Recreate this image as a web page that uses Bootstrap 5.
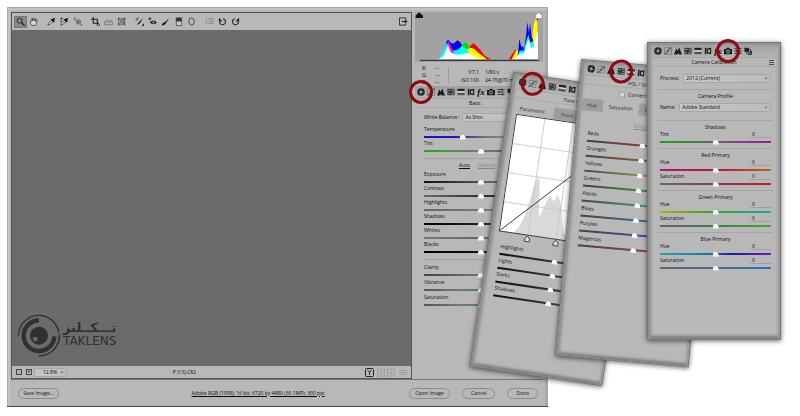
<!DOCTYPE html>
<html lang="en">
<head>
<meta charset="utf-8">
<meta name="viewport" content="width=device-width, initial-scale=1">
<title>Camera Raw</title>
<link href="https://cdn.jsdelivr.net/npm/bootstrap@5.3.0/dist/css/bootstrap.min.css" rel="stylesheet">
<style>
:root{--face:#b8b8b8;--ink:#0c0c0c;--line:#a2a2a2}
body{background:#fff;color:var(--ink);font:5px/7px "Open Sans","Noto Sans",sans-serif;overflow:hidden}
button,input,select{font:inherit;color:inherit}
button{background:none;border:0;padding:0}
svg{display:block}
.stage{padding:7px 0 10px 7px}
.win{width:69%;max-width:541px;background:var(--face);border:solid #a8a8a8;border-width:1px 1px 0;box-shadow:inset 2px 2px 0 #c2c2c2,inset -2px 0 0 #a9a9a9,0 1px 0 #444;padding:4px 4px 0 3px}
.preview{border:1px solid #555;min-width:0}
.bar{height:17px;padding:0 1px 0 2px}
.tools{gap:5px}
.tool{width:13px;height:12px;display:flex;align-items:center;justify-content:center}
.tool.on{background:#888;outline:1px solid #777;outline-offset:-1px}
.tool svg{width:9px;height:9px}
.photo{background:#6b6b6b;min-height:336px;padding:0 0 8px 5px}
.brandname{font-family:"DejaVu Sans",sans-serif;color:#303030;margin-left:2px;padding-top:3px}
.brandname .fa{font-size:13px;line-height:15px;font-weight:700}
.brandname .en{font-size:12px;line-height:13px}
.status{height:12px;padding:0 3px 0 4px}
.zoombtn{width:6px;height:6px;border:1px solid #444;line-height:3px;display:flex;align-items:center;justify-content:center;font-size:5px}
.zoomsel{width:33px;height:8px;margin-left:2px}
.file{margin-left:27%}
.side{width:128px;margin-left:3px}
.hist{background:#a2a2a2}
.info{height:21px;margin-top:3px;padding:0 4px 0 7px}
.chan{width:26px}
.info>div+div{border-left:1px dotted #888}
.expo{padding-left:12px;gap:6px;line-height:8px}
.strip{height:13px;padding:0 1px;background:linear-gradient(#a0a0a0,#b4b4b4);border-bottom:1px solid #a6a6a6}
.tabi{width:10px;height:12px;display:flex;align-items:center;justify-content:center;position:relative}
.tabi svg{width:8px;height:8px}
.tabi i{font:italic 700 9px/9px "Liberation Serif",serif}
.tabi.ring::after{content:"";position:absolute;left:-7px;top:-6px;width:24px;height:24px;border:3px solid #8f0b14;border-radius:50%;z-index:2}
.cap{height:9px;line-height:8px;text-align:center;border-bottom:1px solid #a9a9a9;position:relative}
.cap svg{position:absolute;right:2px;top:2px;width:5px;height:5px}
.inner{padding:0 5px 0 8px}
.field{margin-top:7px;gap:4px}
.side .inner{padding-left:9px}
.side .field{margin-top:5px}
.sel{appearance:none;height:9px;line-height:7px;border:1px solid #a6a6a6;border-radius:1px;padding:0 2px;background:#c6c6c6 linear-gradient(90deg,#c6c6c6,#bcbcbc);min-width:0}
.selbox{position:relative;display:flex;min-width:0}
.selbox::after{content:"";position:absolute;right:4px;top:3px;width:2px;height:2px;border:solid #777;border-width:0 1px 1px 0;transform:rotate(45deg)}
.ctl{height:14px;position:relative}
.ctl label{display:block;height:7px;line-height:7px}
.ctl input[type=range]{appearance:none;display:block;width:100%;height:7px;margin:0;background:none}
.ctl input[type=range]::-webkit-slider-runnable-track{height:2px;background:var(--trk)}
.ctl input[type=range]::-webkit-slider-thumb{appearance:none;width:6px;height:5px;margin-top:-1px;background:#fff;clip-path:polygon(50% 0,100% 45%,100% 100%,0 100%,0 45%)}
.val{width:21px;height:7px;border:0;border-bottom:1px solid #a0a0a0;background:none;padding:0 2px;line-height:6px}
.rule{border-top:1px solid var(--line)}
.auto{padding:3px 0 2px;gap:8px}
.sect{border-top:1px solid #a6a6a6;padding:3px 2px;margin:0 -2px}
.sect.first{margin-top:6px}
.sect h2{font-size:5px;line-height:7px;font-weight:400;margin:0;text-align:center}
a{color:inherit}
.dim{color:#858585}
.foot{height:27px;padding:0 5px 0 7px;border-top:1px solid #777}
.pill{border:1px solid #8c8c8c;border-radius:6px;height:11px;line-height:9px;padding:0 8px;color:#222}
.pill.wide{padding:0 2px;width:41px}
/* floating palettes */
.pal{position:absolute;width:132px;height:296px;background:var(--face);padding:2px 4px;transform-origin:0 0;
 box-shadow:inset 3px 0 3px #8e8e8e,inset -2px 0 2px #9b9b9b,inset 0 -3px 3px #777,inset 0 3px 4px #8d8d8d,0 0 0 1px #777,0 1px 5px 1px rgba(0,0,0,.6)}
.tone{left:64.25%;top:73px;transform:rotate(8.4deg)}
.hsl{left:72.75%;top:60px;transform:rotate(5deg)}
.calib{left:81%;top:43px}
.seg{height:12px;margin:0 -1px}
.seg button{height:12px;background:#9d9d9d;border:1px solid #a3a3a3;color:#333;padding:0 7px}
.seg button.on{background:none;border-color:transparent;color:#222}
.hsl .seg button{padding:0 5px}
.graybox{padding-left:36px;gap:3px;margin:3px 0 4px}
.graybox input{width:6px;height:6px;margin:0;appearance:none;background:#d6d6d6;border:1px solid #999}
.gap1{gap:1px}
</style>
<script src="https://cdn.jsdelivr.net/npm/bootstrap@5.3.0/dist/js/bootstrap.bundle.min.js"></script>
</head>
<body>
<svg width="0" height="0" class="position-absolute" aria-hidden="true">
 <symbol id="basic" viewBox="0 0 10 10"><circle cx="5" cy="5" r="4.7" fill="#222"/><circle cx="5" cy="5" r="1.6" fill="#aaa"/><path d="M5 .5 6.500 4M9.500 5 6 6.500M5 9.500 3.500 6M.5 5 4 3.500" stroke="#888" stroke-width=".6"/></symbol>
 <symbol id="curve" viewBox="0 0 10 10"><path d="M.5 1h9v8h-9zM.5 5h9M5 1v8" fill="#b5b5b5" stroke="#666" stroke-width=".8"/><path d="M.5 9C5 8 5 1.500 9.500 1" fill="none" stroke="#333" stroke-width="1.100"/></symbol>
 <symbol id="detail" viewBox="0 0 10 10"><path d="M0 9.500 3 1.500 4.500 5 6.500.5 10 9.500H6L5 7.500 4 9.500z" fill="#1c1c1c"/></symbol>
 <symbol id="hslg" viewBox="0 0 10 10"><path d="M.5 1h9v8h-9z" fill="#333"/><path d="M1.500 3h3M1.500 7h2M6 2.500h3M6.500 5H9M5 7.500h4" stroke="#bbb" stroke-width=".9"/></symbol>
 <symbol id="split" viewBox="0 0 10 10"><path d="M.5 1h9v3h-9z" fill="#222"/><path d="M.5 4h9v2h-9z" fill="#ddd"/><path d="M.5 6h9v3h-9z" fill="#555"/></symbol>
 <symbol id="lens" viewBox="0 0 10 10"><path d="M1 1h2v8H1zM3.500 2 9 1v8L3.500 8z" fill="#222"/><path d="M5 3.500 7.500 3v4L5 6.500z" fill="#aaa"/></symbol>
 <symbol id="cam" viewBox="0 0 10 10"><path d="M0 2.500h2.500L3.500 1h3l1 1.500H10V9H0z" fill="#1c1c1c"/><circle cx="5" cy="5.600" r="1.900" fill="none" stroke="#ccc"/></symbol>
 <symbol id="lines" viewBox="0 0 10 10"><path d="M.5 2h9M.5 5h9M.5 8h9" stroke="#222"/><path d="M6 1v2M3 4v2M7 7v2" stroke="#222" stroke-width="1.500"/></symbol>
 <symbol id="stack" viewBox="0 0 10 10"><path d="M.5 1h6v5h-6z" fill="#222"/><path d="M2.500 7.500H8V3M4.500 9.200h5V5" fill="none" stroke="#222" stroke-width="1.200"/></symbol>
 <symbol id="zoomi" viewBox="0 0 10 10"><circle cx="4" cy="4" r="2.800" fill="none" stroke="#222"/><path d="m6 6 3.500 3.500" stroke="#222" stroke-width="1.600"/></symbol>
 <symbol id="hand" viewBox="0 0 10 10"><path d="M3 9.300 1 6q0-1.300 1.500-.5L2.200 2.500q.8-1 1.300 0l.5 2-.2-3q.8-1 1.400 0l.3 2.800.6-2.500q1-.8 1.200.3L7 5l1-2q1.200-.3 1 .8L8 7.500l-.8 1.800z" fill="#ddd" stroke="#333" stroke-width=".8"/></symbol>
 <symbol id="drop" viewBox="0 0 10 10"><path d="m1 9 .6-2L5.500 3 7 4.500 3 8.400z" fill="#ddd" stroke="#222" stroke-width=".8"/><path d="m5 2.500 3 3M6 4 8.500 1.500" stroke="#111" stroke-width="2"/></symbol>
 <symbol id="dropplus" viewBox="0 0 10 10"><use href="#drop"/><path d="M0 2h3.500M1.800.2v3.600M0 5h2" stroke="#333" stroke-width=".8"/></symbol>
 <symbol id="target" viewBox="0 0 10 10"><path d="M0 2h4M2 0v4" stroke="#666" stroke-width=".8"/><circle cx="6" cy="5.500" r="2.500" fill="#999" stroke="#666"/><circle cx="6" cy="5.500" r="1" fill="#444"/><path d="M8 9.500h2v-2z" fill="#333"/></symbol>
 <symbol id="crop" viewBox="0 0 10 10"><path d="M2.500 0v7H9M0 2.500h7v7" fill="none" stroke="#222" stroke-width="1.200"/><path d="M8 9.800h2v-2z" fill="#222"/></symbol>
 <symbol id="level" viewBox="0 0 10 10"><path d="M.5 5.500h9v3h-9zM1 5l2-2 2 2 2-2 2 2" fill="none" stroke="#777" stroke-width="1"/></symbol>
 <symbol id="warp" viewBox="0 0 10 10"><path d="M2 .5v9M8.500.5v9M.5 2h9M.5 8h9M4 4l3-1v4L4 6z" fill="none" stroke="#444" stroke-width=".9"/></symbol>
 <symbol id="spot" viewBox="0 0 10 10"><path d="m2 9 2-3L9 1 5.500 7z" fill="#111"/><path d="m1 1 2 2M3.500.5v2M.5 4h2M8 9.500h2v-2z" stroke="#222" stroke-width=".8"/></symbol>
 <symbol id="eye" viewBox="0 0 10 10"><path d="M0 2h4M2 0v4" stroke="#222" stroke-width=".8"/><path d="M2 6q4-4 8 0-4 4-8 0z" fill="#222"/><circle cx="6" cy="6" r="1" fill="#bbb"/></symbol>
 <symbol id="brush" viewBox="0 0 10 10"><path d="M1 9.500q0-3 3-3.500L9 1 5.500 7Q4 9.500 1 9.500z" fill="#111"/></symbol>
 <symbol id="grad" viewBox="0 0 10 10"><path d="M2.500 1h6v8.500h-6z" fill="#ccc" stroke="#333" stroke-width=".8"/><path d="M2.500 1h6v4h-6z" fill="#333"/></symbol>
 <symbol id="oval" viewBox="0 0 10 10"><ellipse cx="5" cy="5" rx="3" ry="4" fill="none" stroke="#333" stroke-width=".9"/></symbol>
 <symbol id="list" viewBox="0 0 10 10"><path d="M1 2h1.500M4 2h5.500M1 4.500h1.500M4 4.500h5.500M1 7h1.500M4 7h5.500" stroke="#7c7c7c"/></symbol>
 <symbol id="ccw" viewBox="0 0 10 10"><path d="M2.500 3.200A3.300 3.300 0 1 0 5.500 2" fill="none" stroke="#222" stroke-width="1.200"/><path d="M1 .8v4h4z" fill="#222"/></symbol>
 <symbol id="cw" viewBox="0 0 10 10"><path d="M7.500 3.200A3.300 3.300 0 1 1 4.500 2" fill="none" stroke="#222" stroke-width="1.200"/><path d="M9 .8v4H5z" fill="#222"/></symbol>
 <symbol id="export" viewBox="0 0 10 10"><path d="M7.500 3V1h-7v8h7V7" fill="none" stroke="#222"/><path d="M3 5h4" stroke="#222" stroke-width="1.200"/><path d="M6.500 2.800 9.800 5 6.500 7.200z" fill="#222"/></symbol>
 <symbol id="menu" viewBox="0 0 5 5"><path d="M0 .5h5M0 2.500h5M0 4.500h5" stroke="#333" stroke-width=".8"/></symbol>
</svg>

<main class="stage position-relative">
 <div class="win">
  <div class="d-flex">
   <section class="preview flex-grow-1 d-flex flex-column">
    <div class="bar d-flex align-items-center justify-content-between">
     <div class="tools d-flex" id="tools"></div>
     <button class="tool" aria-label="Full screen"><svg><use href="#export"/></svg></button>
    </div>
    <div class="photo flex-grow-1 d-flex align-items-end">
     <div class="d-flex align-items-start">
      <svg width="44" height="45" viewBox="52 70 132 135" fill="none" stroke="#303030">
       <circle cx="118" cy="138" r="27" fill="#303030" stroke="none"/><circle cx="107" cy="148" r="7" fill="#6b6b6b" stroke="none"/>
       <path d="M118 92A46 46 0 1 0 164 140" stroke-width="13"/>
       <path d="M56 138A62 62 0 0 1 118 77 61 61 0 0 1 177 125" stroke-width="4"/>
       <path d="M180 136A62 62 0 0 1 118 199" stroke-width="4"/><path d="M118 77A61 61 0 0 1 160 182" stroke-width="2"/>
      </svg>
      <div class="brandname d-flex flex-column mt-1"><span class="fa" lang="fa" dir="rtl">تـــکــلنز</span><span class="en">TAKLENS</span></div>
     </div>
    </div>
    <div class="status d-flex align-items-center">
     <button class="zoombtn" aria-label="Zoom out">-</button><button class="zoombtn ms-1 me-0" aria-label="Zoom in">+</button>
     <span class="selbox"><select class="sel zoomsel ps-2" aria-label="Zoom level"><option>12.8%</option></select></span>
     <span class="file">P (13).CR2</span>
     <svg class="ms-auto" width="43" height="9" viewBox="0 0 43 9" fill="none" stroke="#222"><rect x=".5" y=".5" width="8" height="8" rx="1"/><path d="m2.500 2 2 2.500 2-2.500M4.500 4.500V7" /><g stroke="#999"><path d="M12.500 1h7v7h-7zM22.500 1h7v7h-7zM14.500 3h3M14.500 6h3M16 3v3M24 4.500h4M26 2.500v4M34 2.500h8M34 4.500h8M34 6.500h8" stroke-width=".8"/></g></svg>
    </div>
   </section>

   <aside class="side flex-shrink-0">
    <div class="hist">
     <svg class="w-100" height="50" viewBox="60 36 384 150" preserveAspectRatio="none">
      <path d="M140 178 148 150 155 124 160 119 168 128 175 131 188 121 197 128 203 140 225 178z" fill="#0000f0"/>
      <path d="M213 178 222 145 228 135 236 130 245 138 258 152 270 168 288 178z" fill="#f00"/>
      <path d="M188 178 197 142 205 132 212 127 220 136 228 150 240 178z" fill="#0d0"/>
      <path d="M200 178 217 148 226 143 238 147 252 160 276 178z" fill="#ff0"/>
      <path d="M132 178 148 146 155 128 163 142 176 152 190 148 202 138 213 145 221 156 230 178z" fill="#0ff"/>
      <path d="M157 130 160 122 166 136 178 160 168 164z" fill="#f0f"/>
      <path d="M130 178 146 168 155 146 160 136 167 156 182 164 204 163 217 158 228 164 244 173 270 178z" fill="#fff"/>
      <path d="M342 178 350 164 362 148 366 158 378 140 388 150 400 110 410 120 420 90 428 48 428 178z" fill="#f00"/>
      <path d="M350 178 362 154 376 148 388 142 402 112 412 116 416 76 421 58 428 64 428 178z" fill="#ff0"/>
      <path d="M366 178 370 150 373 116 378 138 388 144 394 100 397 66 402 100 405 68 410 112 414 120 418 178z" fill="#0000f0"/>
      <path d="M364 178 374 152 386 152 394 122 400 104 406 128 414 124 422 178z" fill="#0ff"/>
      <path d="M358 178 372 162 388 160 396 128 402 118 407 144 416 140 421 112 429 92 429 178z" fill="#fff"/>
      <path d="M75 181H432" stroke="#222" stroke-width="3"/>
      <path d="M62 54V47L72 37 84 47V54z" fill="#111"/><path d="M423 54V46L431 38 440 46V54z" fill="#fff"/>
     </svg>
    </div>
    <div class="info d-flex align-items-center">
     <div class="chan"><div class="d-flex gap-2"><span>R:</span><span>---</span></div><div class="d-flex gap-2"><span>G:</span><span>---</span></div><div class="d-flex gap-2"><span>B:</span><span>---</span></div></div>
     <div class="expo d-flex text-nowrap"><div class="text-end">f/7.1<br>ISO 100</div><div>1/80 s<br>24-70@70 mm</div></div>
    </div>
    <div class="strip d-flex" data-ring="0"></div>
    <div class="cap pe-2">Basic</div>
    <div class="inner">
     <div class="field d-flex align-items-center mb-1"><label for="wb">White Balance:</label><span class="selbox flex-grow-1"><select id="wb" class="sel w-100"><option>As Shot</option></select></span></div>
     <div data-sliders="Temperature,33,#1616c8 25%|#777 55%|#c8bc10;Tint,50,#14b414|#777|#b414b4"></div>
     <div class="rule mt-1"></div>
     <div class="auto d-flex justify-content-center pe-2"><a href="#">Auto</a><a href="#" class="dim">Default</a></div>
     <div data-sliders="Exposure,50,#111|#555|#999;Contrast,50,#666|#333|#111;Highlights,50,#666|#777|#aaa;Shadows,50,#000|#222|#888;Whites,50,#777|#666|#aaa;Blacks,50,#000|#111|#777"></div>
     <div class="rule mt-1 mb-1"></div>
     <div class="d-flex flex-column gap1" data-sliders="Clarity,50,#444|#777|#333;Vibrance,50,#555|#777 30%|#2d8a3c|#b33;Saturation,50,#555|#777 30%|#2d8a3c|#b33"></div>
    </div>
   </aside>
  </div>
  <footer class="foot d-flex align-items-center">
   <button class="pill wide">Save Image...</button>
   <a href="#" class="mx-auto ps-5">Adobe RGB (1998); 16 bit; 6720 by 4480 (30.1MP); 300 ppi</a>
   <div class="d-flex gap-2"><button class="pill wide me-1">Open Image</button><button class="pill me-1">Cancel</button><button class="pill">Done</button></div>
  </footer>
 </div>

 <section class="pal tone">
  <div class="strip d-flex" data-ring="1"></div>
  <div class="cap">Tone Curve</div>
  <div class="seg d-flex mt-1"><button class="on">Parametric</button><button>Point</button></div>
  <div class="px-1">
   <svg class="w-100" height="126" viewBox="0 0 117 124" preserveAspectRatio="none">
    <path d="M.5.5h116v116H.5z" fill="#fff"/>
    <path d="M15 116C22 110 24 96 27 80Q28 62 32 58 34 62 36 82L38 98 42 86 46 74 50 80 54 73Q60 84 62 98T72 116z" fill="#d9d9d9"/>
    <path d="M29.500 0v116M58.500 0v116M87.500 0v116M0 29.500h116M0 58.500h116M0 87.500h116" stroke="#c6c6c6" stroke-width=".8"/>
    <path d="M.5.5h116v116H.5zM.5 116.500l116-116" fill="none" stroke="#333" stroke-width=".9"/>
    <g fill="#ddd" stroke="#333" stroke-width=".8"><path id="knob" d="M27 123v-3l2.500-2.500 2.500 2.500v3z"/><use href="#knob" x="29"/><use href="#knob" x="58"/></g>
   </svg>
  </div>
  <div class="inner pt-1" data-sliders="Highlights,50,#111|#333|#888;Lights,50,#111|#333|#888;Darks,50,#111|#333|#888;Shadows,50,#111|#333|#888"></div>
 </section>

 <section class="pal hsl">
  <div class="strip d-flex" data-ring="3"></div>
  <div class="cap">HSL / Grayscale</div>
  <div class="graybox d-flex align-items-center"><input type="checkbox" id="gray"><label for="gray">Convert to Grayscale</label></div>
  <div class="seg d-flex"><button>Hue</button><button class="on">Saturation</button><button>Luminance</button></div>
  <div class="text-center pt-1 pb-1 mt-1"><a href="#" class="dim">Default</a></div>
  <div class="inner d-flex flex-column gap1" data-sliders="Reds,50,#444|#8a3a4a|#c22;Oranges,50,#444|#8a5a3a|#c62;Yellows,50,#444|#8a8a3a|#bb2;Greens,50,#444|#3a8a3a|#2b2;Aquas,50,#444|#3a8a7a|#2ba;Blues,50,#444|#3a6a8a|#26c;Purples,50,#444|#6a3a8a|#82c;Magentas,50,#444|#8a3a6a|#c28"></div>
 </section>

 <section class="pal calib">
  <div class="strip d-flex" data-ring="7"></div>
  <div class="cap">Camera Calibration<svg><use href="#menu"/></svg></div>
  <div class="inner">
   <div class="field d-flex align-items-center"><label for="proc">Process:</label><span class="selbox flex-grow-1"><select id="proc" class="sel w-100"><option>2012 (Current)</option></select></span></div>
   <div class="sect first"><h2>Camera Profile</h2></div>
   <div class="d-flex align-items-center gap-1 mb-2"><label for="prof">Name:</label><span class="selbox flex-grow-1"><select id="prof" class="sel w-100"><option>Adobe Standard</option></select></span></div>
   <div class="sect"><h2>Shadows</h2><div data-val data-sliders="Tint,50,#14a814|#666|#a814a8"></div></div>
   <div class="sect"><h2>Red Primary</h2><div data-val data-sliders="Hue,50,#b0148c|#b8143c|#c06414;Saturation,50,#666|#8a3a4a|#d0142c"></div></div>
   <div class="sect"><h2>Green Primary</h2><div data-val data-sliders="Hue,50,#b4a814|#28a828|#20a8a0;Saturation,50,#666|#4a7a4a|#3ca828"></div></div>
   <div class="sect"><h2>Blue Primary</h2><div data-val data-sliders="Hue,50,#20a8a0|#1c74b4 45%|#1c1ca8 65%|#8014b4;Saturation,50,#666|#466a8a|#1c74c0"></div></div>
  </div>
 </section>
</main>

<script>
const groups = [["zoomi","hand"],["drop","dropplus","target"],["crop","level","warp"],["spot","eye","brush","grad","oval"],["list","ccw","cw"]];
document.getElementById("tools").innerHTML = groups.map(g =>
  `<div class="d-flex">${g.map(n => `<button class="tool${n === "zoomi" ? " on" : ""}" aria-label="${n}"><svg><use href="#${n}"/></svg></button>`).join("")}</div>`).join("");

const tabs = ["basic","curve","detail","hslg","split","lens","fx","cam","lines","stack"];
document.querySelectorAll(".strip").forEach(s => {
  s.innerHTML = tabs.map((t, i) =>
    `<button class="tabi${i == s.dataset.ring ? " ring" : ""}" aria-label="${t}">${t === "fx" ? "<i>fx</i>" : `<svg><use href="#${t}"/></svg>`}</button>`).join("");
});

let n = 0;
document.querySelectorAll("[data-sliders]").forEach(box => {
  box.innerHTML = box.dataset.sliders.split(";").map(row => {
    const [name, value, stops] = row.split(","), id = "s" + n++;
    const label = `<label for="${id}">${name}</label>`;
    const head = "val" in box.dataset
      ? `<div class="d-flex justify-content-between">${label}<input class="val" type="text" value="0" aria-label="${name} value"></div>` : label;
    return `<div class="ctl">${head}<input type="range" id="${id}" value="${value}" style="--trk:linear-gradient(90deg,${stops.replaceAll("|", ",")})"></div>`;
  }).join("");
});
</script>
</body>
</html>
